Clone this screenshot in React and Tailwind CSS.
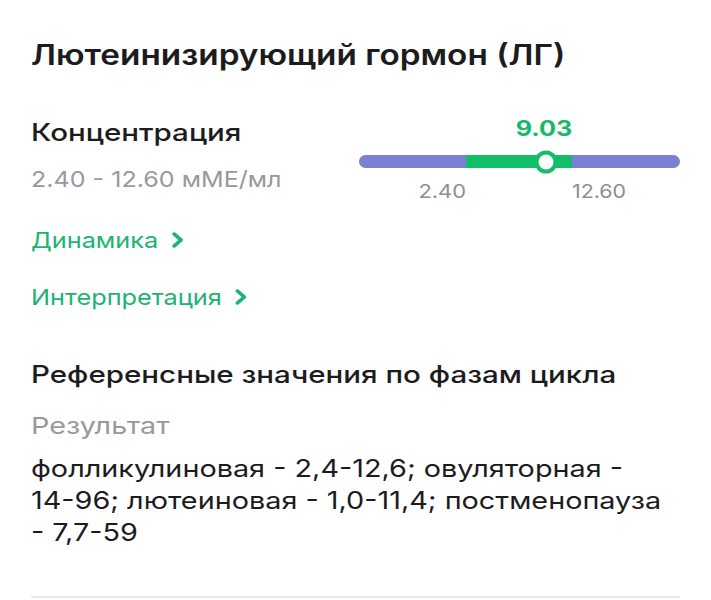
import React from "react";

const FONT = { fontFamily: "Inter, 'Noto Sans', sans-serif" };

function Chevron() {
  return (
    <svg width="11" height="16" viewBox="0 0 11 16" className="ml-[11px] inline-block">
      <polyline
        points="2.5,2 8.5,8 2.5,14"
        fill="none"
        stroke="currentColor"
        strokeWidth="3.2"
        strokeLinecap="round"
        strokeLinejoin="round"
      />
    </svg>
  );
}

// positions along the bar are in percent of its width
function RangeBar({ value, min, max, minAt, maxAt, valueAt }) {
  return (
    <div className="w-[321px] flex flex-col">
      <div className="relative h-[26px] text-[21px] leading-[26px] font-bold text-[#16b86b]">
        <span className="absolute -translate-x-1/2" style={{ left: `${valueAt - 0.8}%` }}>
          <span className="inline-block scale-x-[1.2]">{value}</span>
        </span>
      </div>
      <div className="relative mt-[13px] h-[13px] rounded-full bg-[#7b7fd6]">
        <div
          className="absolute top-0 h-full bg-[#12bf66]"
          style={{ left: `${minAt}%`, width: `${maxAt - minAt}%` }}
        />
        <div
          className="absolute top-1/2 h-[23px] w-[23px] -translate-x-1/2 -translate-y-1/2 rounded-full border-[4px] border-[#12bf66] bg-white"
          style={{ left: `${valueAt}%` }}
        />
      </div>
      <div className="relative mt-[12px] h-[24px] text-[19px] leading-[24px] text-[#8e8e93]">
        <span
          className="absolute -translate-x-full inline-block origin-right scale-x-[1.15]"
          style={{ left: `${minAt}%` }}
        >
          {min}
        </span>
        <span
          className="absolute inline-block origin-left scale-x-[1.125]"
          style={{ left: `${maxAt}%` }}
        >
          {max}
        </span>
      </div>
    </div>
  );
}

export default function App() {
  return (
    <div className="w-[711px] h-[600px] overflow-hidden bg-white px-[31px] pt-[38px] text-[#1c1c1e]" style={FONT}>
      <h1 className="w-fit origin-left scale-x-[1.19] text-[28px] leading-[34px] font-semibold">
        Лютеинизирующий гормон (ЛГ)
      </h1>

      {/* Concentration row */}
      <div className="mt-[44px] flex justify-between items-start">
        <div className="pt-[2px] flex flex-col items-start">
          <div className="origin-left scale-x-[1.23] text-[24px] leading-[30px] font-medium">
            Концентрация
          </div>
          <div className="mt-[17px] origin-left scale-x-[1.14] text-[22px] leading-[28px] text-[#98989d]">
            2.40 - 12.60 мМЕ/мл
          </div>
        </div>
        <RangeBar value="9.03" min="2.40" max="12.60" minAt={33.4} maxAt={66.4} valueAt={58.3} />
      </div>

      {/* Links */}
      <div className="mt-[22px] flex flex-col items-start gap-[29px] text-[22px] leading-[28px] text-[#1db373]">
        <a className="flex items-center origin-left scale-x-[1.15]">
          Динамика <Chevron />
        </a>
        <a className="flex items-center origin-left scale-x-[1.15]">
          Интерпретация <Chevron />
        </a>
      </div>

      {/* Reference values */}
      <div className="mt-[49px] w-fit origin-left scale-x-[1.23] text-[24px] leading-[30px] font-medium">
        Референсные значения по фазам цикла
      </div>
      <div className="mt-[21px] w-fit origin-left scale-x-[1.25] text-[23px] leading-[30px] text-[#98989d]">
        Результат
      </div>
      <p className="mt-[12px] w-[540px] origin-left scale-x-[1.2] text-[24px] leading-[32px]">
        фолликулиновая - <span className="whitespace-nowrap">2,4-12,6;</span> овуляторная -{" "}
        <span className="whitespace-nowrap">14-96;</span> лютеиновая -{" "}
        <span className="whitespace-nowrap">1,0-11,4;</span> постменопауза{" "}
        <span className="whitespace-nowrap">- 7,7-59</span>
      </p>

      <div className="mt-[47px] h-[2px] bg-[#e8e8ea]" />
    </div>
  );
}
